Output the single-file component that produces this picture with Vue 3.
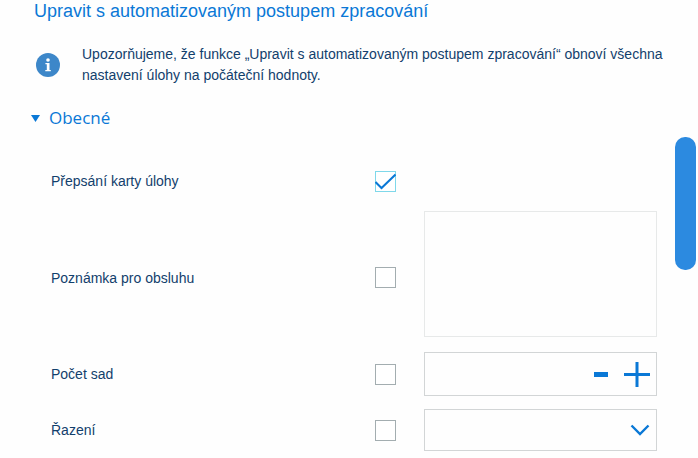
<script setup>
import { ref } from 'vue'

const isOpen = ref(true)
const note = ref('')
const copies = ref('')
const sorting = ref('')

const enabled = ref({
  card: true,
  note: false,
  copies: false,
  sorting: false
})

const changeCopies = (step) => {
  copies.value = String(Math.max(1, (Number(copies.value) || 0) + step))
}
</script>

<template>
  <div class="page">
    <main class="content">
      <h1 class="title">Upravit s automatizovaným postupem zpracování</h1>

      <div class="notice">
        <svg class="notice-icon" viewBox="0 0 24 24" aria-hidden="true">
          <circle cx="12" cy="12" r="12" fill="#3d87c9"/>
          <circle cx="12" cy="7" r="1.8" fill="#fff"/>
          <path d="M9.4 10h4.1v7h1.3v1.3H9.3V17h1.5v-5.7H9.4z" fill="#fff"/>
        </svg>
        <p class="notice-text">
          Upozorňujeme, že funkce „Upravit s automatizovaným postupem zpracování“ obnoví všechna nastavení úlohy na počáteční hodnoty.
        </p>
      </div>

      <h2 class="section-heading">
        <button type="button" class="section-toggle" :aria-expanded="isOpen" @click="isOpen = !isOpen">
          <svg class="section-arrow" :class="{ closed: !isOpen }" viewBox="0 0 9 7" aria-hidden="true">
            <path d="M0 0h9L4.5 7z" fill="#0a78d6"/>
          </svg>
          Obecné
        </button>
      </h2>

      <div v-if="isOpen" class="rows">
        <div class="row">
          <label for="use-card">Přepsání karty úlohy</label>
          <span class="check">
            <input id="use-card" v-model="enabled.card" type="checkbox">
            <svg v-if="enabled.card" viewBox="0 0 21 21" aria-hidden="true">
              <path d="M0.5 11l6 6L20.5 3.5" fill="none" stroke="#0a78d6" stroke-width="2"/>
            </svg>
          </span>
        </div>

        <div class="row">
          <label for="use-note">Poznámka pro obsluhu</label>
          <span class="check">
            <input id="use-note" v-model="enabled.note" type="checkbox">
            <svg v-if="enabled.note" viewBox="0 0 21 21" aria-hidden="true">
              <path d="M0.5 11l6 6L20.5 3.5" fill="none" stroke="#0a78d6" stroke-width="2"/>
            </svg>
          </span>
          <textarea v-model="note" class="note" aria-label="Poznámka pro obsluhu"></textarea>
        </div>

        <div class="row">
          <label for="use-copies">Počet sad</label>
          <span class="check">
            <input id="use-copies" v-model="enabled.copies" type="checkbox">
            <svg v-if="enabled.copies" viewBox="0 0 21 21" aria-hidden="true">
              <path d="M0.5 11l6 6L20.5 3.5" fill="none" stroke="#0a78d6" stroke-width="2"/>
            </svg>
          </span>
          <div class="stepper">
            <input v-model="copies" type="text" inputmode="numeric" aria-label="Počet sad">
            <button type="button" aria-label="Snížit" @click="changeCopies(-1)">
              <svg viewBox="0 0 28 28" aria-hidden="true">
                <path d="M7 12h14v5H7z" fill="#0a78d6"/>
              </svg>
            </button>
            <button type="button" aria-label="Zvýšit" @click="changeCopies(1)">
              <svg viewBox="0 0 28 28" aria-hidden="true">
                <path d="M1 13h26v3H1zM12.5 2h3v25h-3z" fill="#0a78d6"/>
              </svg>
            </button>
          </div>
        </div>

        <div class="row">
          <label for="use-sorting">Řazení</label>
          <span class="check">
            <input id="use-sorting" v-model="enabled.sorting" type="checkbox">
            <svg v-if="enabled.sorting" viewBox="0 0 21 21" aria-hidden="true">
              <path d="M0.5 11l6 6L20.5 3.5" fill="none" stroke="#0a78d6" stroke-width="2"/>
            </svg>
          </span>
          <div class="dropdown">
            <select v-model="sorting" aria-label="Řazení">
              <option value=""></option>
            </select>
            <svg viewBox="0 0 20 12" aria-hidden="true">
              <path d="M1.5 1.5l8.5 8.5 8.5-8.5" fill="none" stroke="#0a78d6" stroke-width="2.4"/>
            </svg>
          </div>
        </div>
      </div>
    </main>

    <div class="scroll-track">
      <div class="scroll-thumb"></div>
    </div>
  </div>
</template>

<style>
body {
  margin: 0;
  background: #fefefe;
}
</style>

<style scoped>
.page {
  display: flex;
  font-family: "Liberation Sans", Arial, sans-serif;
  font-size: 14px;
  color: #12406c;
}

.content {
  flex: 1;
  min-width: 0;
  padding-left: 34px;
}

.title {
  margin: 0;
  font-size: 18px;
  font-weight: 400;
  line-height: 22px;
  color: #0a78d6;
}

.notice {
  display: flex;
  align-items: center;
  gap: 22px;
  margin-top: 22px;
  padding-left: 2px;
}

.notice-icon {
  flex: none;
  width: 24px;
  height: 24px;
}

.notice-text {
  margin: 0;
  line-height: 21px;
}

.section-heading {
  margin: 19px 0 0;
  font-size: 17px;
  font-weight: 400;
}

.section-toggle {
  display: flex;
  align-items: center;
  gap: 9px;
  margin-left: -3px;
  padding: 0;
  border: 0;
  background: none;
  font-family: "Open Sans", "Noto Sans", sans-serif;
  font-size: 17px;
  line-height: 26px;
  color: #0a78d6;
  cursor: pointer;
}

.section-arrow {
  width: 9px;
  height: 7px;
}

.section-arrow.closed {
  transform: rotate(-90deg);
}

.rows {
  display: flex;
  flex-direction: column;
  gap: 4px;
  margin-top: 24px;
  padding: 0 18px 0 17px;
}

.row {
  display: grid;
  grid-template-columns: 1fr 21px 233px;
  column-gap: 28px;
  align-items: center;
  min-height: 52px;
}

.check {
  position: relative;
  width: 21px;
  height: 21px;
}

.check input {
  display: block;
  appearance: none;
  box-sizing: border-box;
  width: 21px;
  height: 21px;
  margin: 0;
  border: 1px solid #a3adb0;
  background: #fff;
}

.check input:checked {
  border-color: #7fd8ea;
}

.check svg {
  position: absolute;
  inset: 0;
  pointer-events: none;
}

.note {
  box-sizing: border-box;
  width: 100%;
  height: 126px;
  margin: 0 0 7px;
  padding: 8px;
  border: 1px solid #e7e9e9;
  background: transparent;
  font: inherit;
  color: inherit;
  resize: none;
}

.stepper {
  display: flex;
  align-items: center;
  gap: 8px;
  box-sizing: border-box;
  height: 44px;
  padding-right: 5px;
  border: 1px solid #d2d5d6;
}

.stepper input {
  flex: 1;
  min-width: 0;
  padding: 0 8px;
  border: 0;
  background: none;
  font: inherit;
  color: inherit;
}

.stepper button {
  flex: none;
  width: 28px;
  height: 28px;
  padding: 0;
  border: 0;
  background: none;
  cursor: pointer;
}

.stepper svg {
  display: block;
}

.dropdown {
  display: grid;
  align-items: center;
  box-sizing: border-box;
  height: 42px;
  border: 1px solid #d2d5d6;
}

.dropdown select,
.dropdown svg {
  grid-area: 1 / 1;
}

.dropdown select {
  appearance: none;
  width: 100%;
  height: 40px;
  padding: 0 36px 0 8px;
  border: 0;
  background: none;
  font: inherit;
  color: inherit;
}

.dropdown svg {
  justify-self: end;
  width: 20px;
  height: 12px;
  margin-right: 6px;
  pointer-events: none;
}

.scroll-track {
  flex: none;
  padding: 137px 2px 0 0;
}

.scroll-thumb {
  width: 21px;
  height: 133px;
  border-radius: 10px;
  background: #2c8ae0;
}
</style>
